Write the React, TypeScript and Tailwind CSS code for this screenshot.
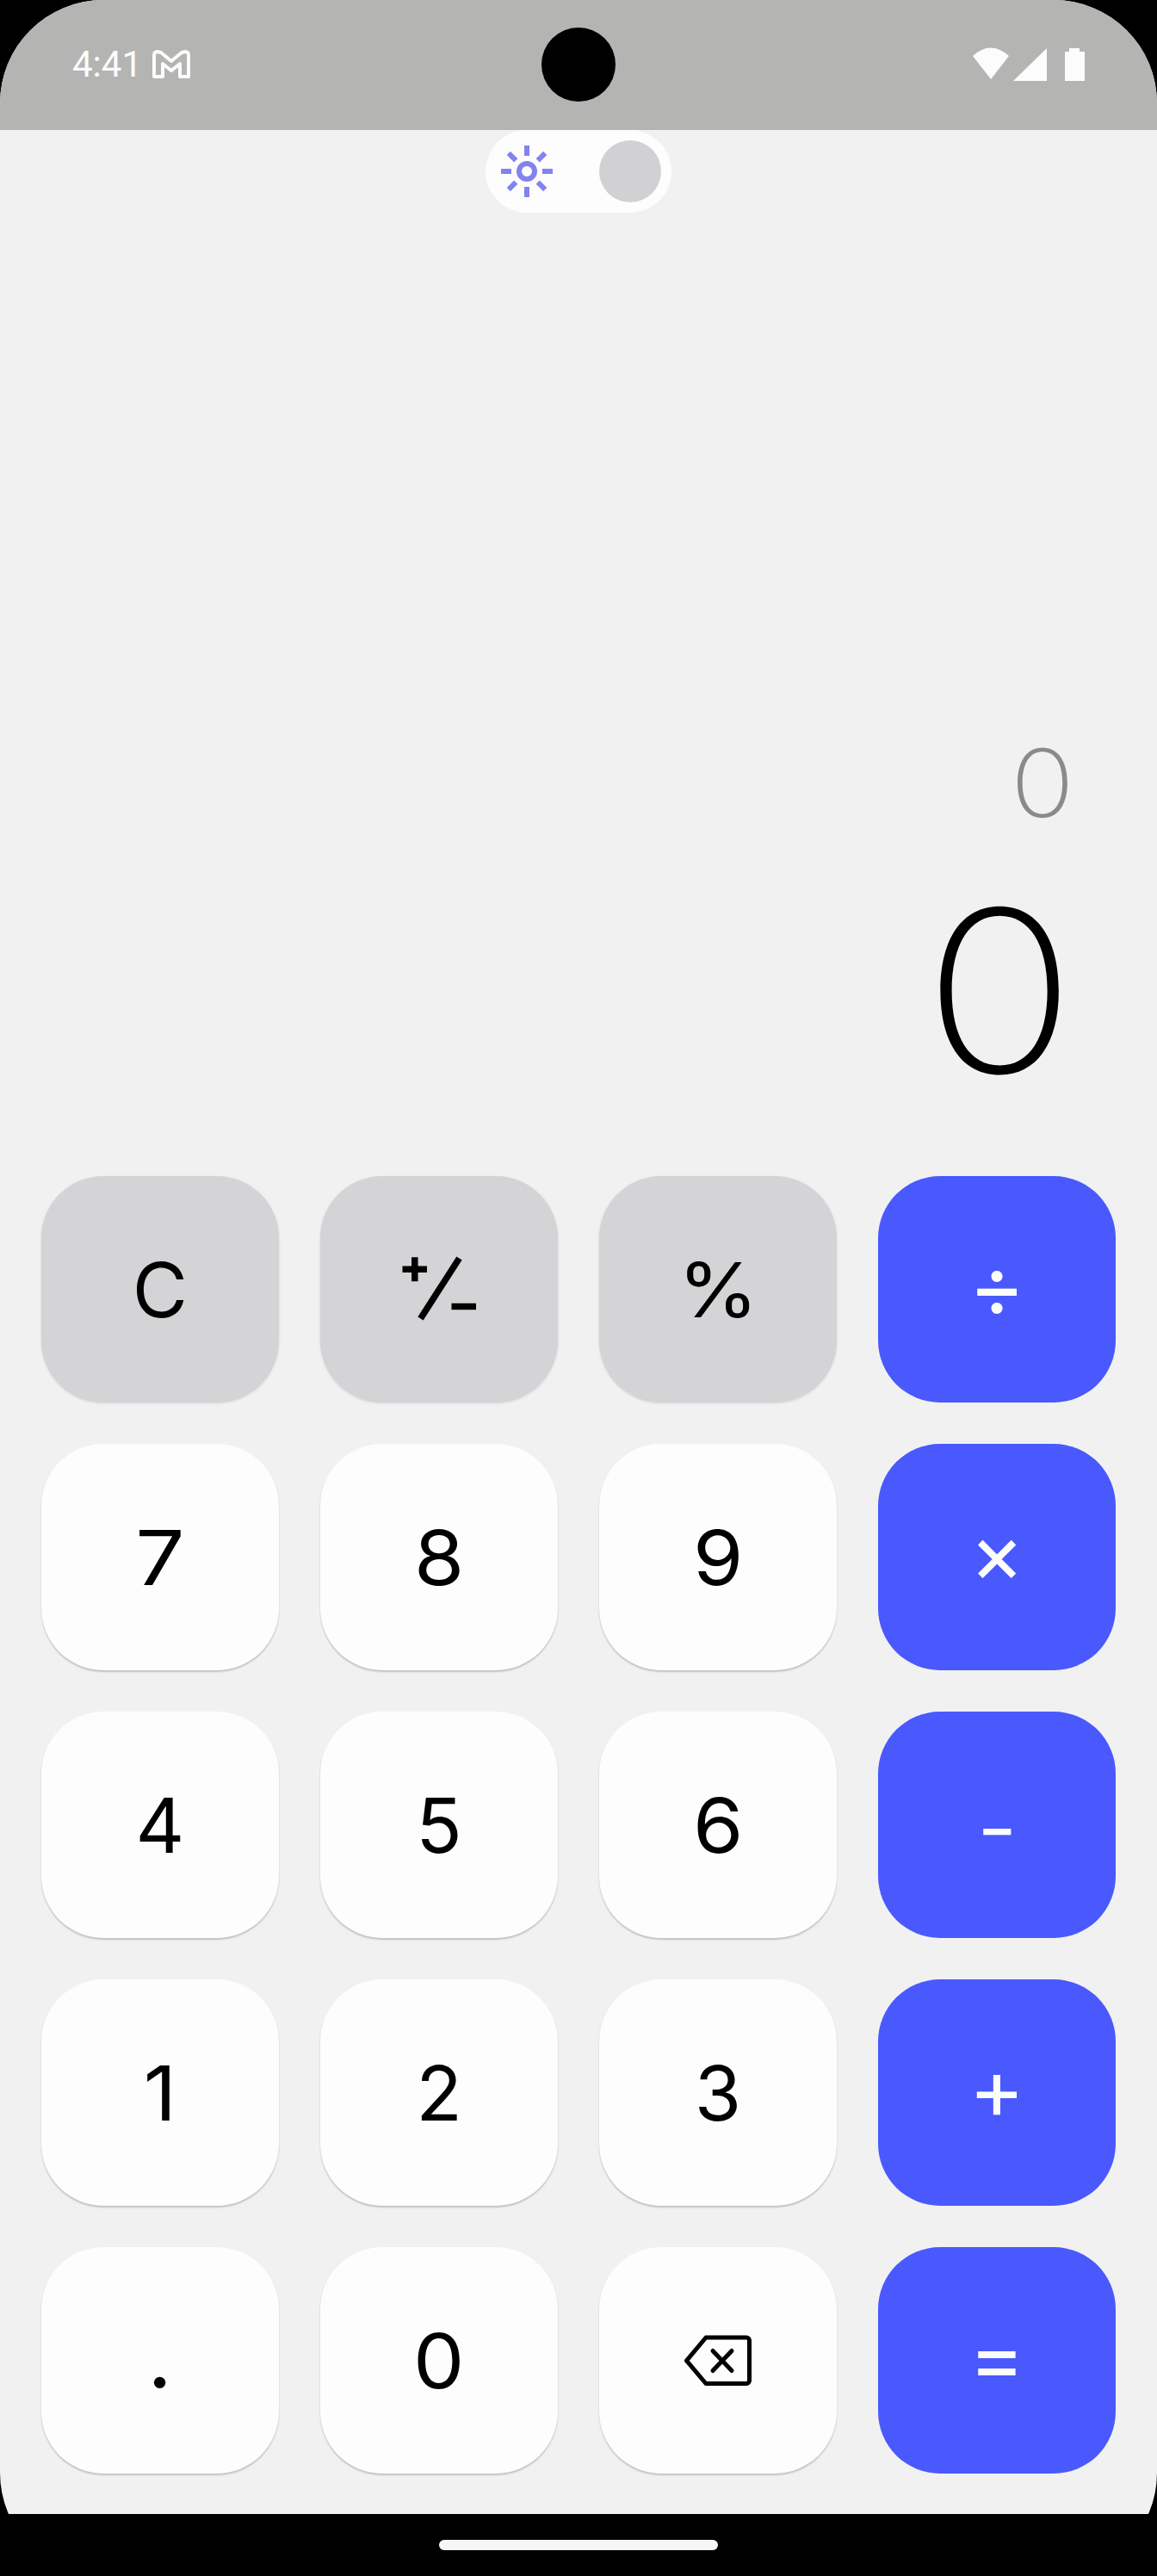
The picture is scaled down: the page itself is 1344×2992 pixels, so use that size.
import React from 'react';

type Kind = 'fn' | 'num' | 'op';

const surface: Record<Kind, string> = {
  fn: 'bg-[#d4d4d6] text-black shadow-[0_1px_3px_rgba(0,0,0,0.12)]',
  num: 'bg-[#fdfdfe] text-black shadow-[0_2px_2px_rgba(0,0,0,0.2)]',
  op: 'bg-[#4959fd] text-[#fbfcfc]',
};

function PlusMinusIcon() {
  return (
    <svg width="92" height="80" viewBox="0 0 92 80" fill="none" stroke="currentColor" strokeWidth="7.5">
      <path d="M3.500 16.300H32M17.800 2.300V30.300" />
      <path d="M24.500 73.500L69.500 3.500" strokeWidth="7.5" />
      <path d="M60.500 59.500H89" />
    </svg>
  );
}

function BackspaceIcon() {
  return (
    <svg width="78" height="60" viewBox="0 0 78 60" fill="none" stroke="currentColor" strokeWidth="5" strokeLinecap="round" strokeLinejoin="round">
      <path d="M25 3H72a3.500 3.500 0 0 1 3.500 3.500V53a3.500 3.500 0 0 1 -3.500 3.500H25L2.500 29.800Z" />
      <path d="M33 18.500L55 41.500M55 18.500L33 41.500" />
    </svg>
  );
}

function SunIcon() {
  const angles = [0, 45, 90, 135, 180, 225, 270, 315];
  return (
    <svg width="64" height="64" viewBox="-32 -32 64 64" fill="none" stroke="#8383ee" strokeWidth="6">
      <circle r="9" />
      {angles.map((a) => (
        <path key={a} d="M0 -18V-30" transform={`rotate(${a})`} />
      ))}
    </svg>
  );
}

function StatusBar() {
  return (
    <header className="relative flex h-[151px] items-start justify-between bg-[#b4b4b2] pl-[84px] pr-[83px] text-[#fcfcfc]">
      <div className="mt-[51px] flex h-[48px] items-center gap-[11px]">
        <span className="font-['Roboto'] text-[42px] leading-[48px]">4:41</span>
        <svg width="46" height="36" viewBox="0 0 46 36" fill="none" stroke="currentColor" strokeWidth="4" strokeLinejoin="round">
          <path d="M3 7Q3 3 7 3L11 4L23 14L35 4L39 3Q43 3 43 7V32H33V17L23 25L13 17V32H3Z" />
        </svg>
      </div>
      <svg className="mt-[54px]" width="132" height="42" viewBox="0 0 132 42" fill="currentColor">
        <path d="M1 11Q22 -8 43 11L22 38Z" />
        <path d="M48 40L87 2V40Z" />
        <path d="M108 6H113V2H125V6H131V40H108Z" />
      </svg>
      <div className="absolute left-[629px] top-[32px] size-[86px] rounded-full bg-black" />
    </header>
  );
}

function Key({ kind, glyph, children }: { kind: Kind; glyph: string; children: React.ReactNode }) {
  return (
    <button className={`flex h-[263px] items-center justify-center rounded-[72px] text-[88px] leading-none ${surface[kind]}`}>
      <span className={glyph}>{children}</span>
    </button>
  );
}

const digit = 'scale-x-[1.07]';

const keys: [Kind, React.ReactNode, string][] = [
  ['fn', 'C', ''],
  ['fn', <PlusMinusIcon />, ''],
  ['fn', '%', 'scale-x-[1.08]'],
  ['op', '÷', 'text-[100px] font-[380] -translate-y-[5px]'],
  ['num', '7', 'scale-x-[1.15]'],
  ['num', '8', digit],
  ['num', '9', digit],
  ['op', '×', 'text-[96px] font-[380] -translate-y-[6px]'],
  ['num', '4', ''],
  ['num', '5', ''],
  ['num', '6', digit],
  ['op', '-', 'scale-x-[1.14] translate-y-[3px]'],
  ['num', '1', digit],
  ['num', '2', ''],
  ['num', '3', ''],
  ['op', '+', 'text-[98px] font-[380] -translate-y-[5px]'],
  ['num', '.', 'scale-[1.15] -translate-y-1.5'],
  ['num', '0', digit],
  ['num', <BackspaceIcon />, ''],
  ['op', '=', 'text-[98px] font-[380] -translate-y-[4px]'],
];

export default function App() {
  return (
    <div className="h-[2992px] w-[1344px] bg-black font-['Inter',sans-serif]">
      <div className="flex h-full flex-col overflow-hidden rounded-[120px] bg-[linear-gradient(to_top,#000_72px,#f1f1f2_72px)]">
        <StatusBar />
        <div className="mx-auto flex h-[96px] w-[216px] items-center justify-between rounded-full bg-[#fdfdfe] pl-4 pr-3">
          <SunIcon />
          <div className="size-[72px] rounded-full bg-[#d1d1d3]" />
        </div>
        <div className="flex flex-1 flex-col items-end justify-end pr-[100px]">
          <div className="mb-[37px] scale-x-[1.13] text-[109px] font-[240] leading-[120px] text-[#8a8a8a]">0</div>
          <div className="mb-[70px] mr-1 scale-x-[1.12] text-[262px] font-[220] leading-[290px] text-black">0</div>
        </div>
        <main className="grid grid-cols-4 gap-12 px-12 pb-[47px]">
          {keys.map(([kind, label, glyph], i) => (
            <Key key={i} kind={kind} glyph={glyph}>{label}</Key>
          ))}
        </main>
        <nav className="flex h-[72px] items-center justify-center bg-black">
          <div className="h-[12px] w-[324px] rounded-full bg-[#f6f6f6]" />
        </nav>
      </div>
    </div>
  );
}
